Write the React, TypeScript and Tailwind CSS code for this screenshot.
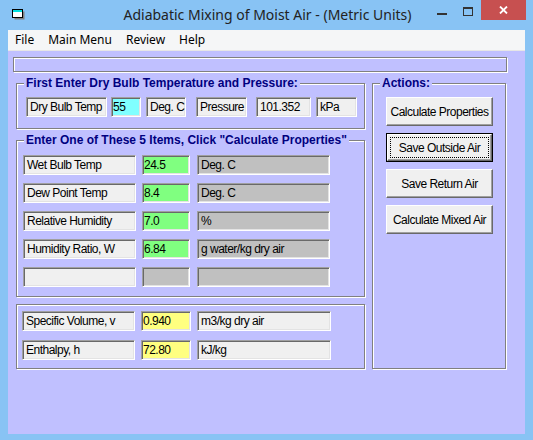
import React from 'react';

const sans = { fontFamily: '"Liberation Sans", Arial, sans-serif' };

const etched = 'border border-[#808080] shadow-[inset_1px_1px_0_#fff,1px_1px_0_#fff]';
const sunken =
  'border border-t-[#a0a0a0] border-l-[#a0a0a0] border-b-white border-r-white shadow-[inset_1px_1px_0_#696969,inset_-1px_-1px_0_#e3e3e3]';

interface FieldProps {
  w: string;
  bg?: string;
  pad?: boolean;
  children?: React.ReactNode;
}

const Field = ({ w, bg = 'bg-[#f0f0f0]', pad = true, children }: FieldProps) => (
  <div
    className={`h-[20px] shrink-0 ${w} ${bg} ${sunken} flex items-center text-[12px] tracking-[-0.5px] text-black whitespace-nowrap overflow-hidden ${pad ? 'pl-[3px]' : 'pl-[1px]'}`}
  >
    {children}
  </div>
);

const Group = ({ title, className, children }: { title?: string; className: string; children: React.ReactNode }) => (
  <div className={`relative ${etched} ${className}`}>
    {title && (
      <span className="absolute top-[-8px] left-[7px] px-[2px] bg-[#c0c0ff] text-[12px] leading-[14px] font-bold text-[#000080] whitespace-nowrap">
        {title}
      </span>
    )}
    {children}
  </div>
);

const Button = ({ children, focused }: { children: React.ReactNode; focused?: boolean }) =>
  focused ? (
    <div className="w-[107px] h-[29px] border border-black">
      <div className="h-full bg-[#f0f0f0] border border-t-white border-l-white border-b-[#696969] border-r-[#696969] shadow-[inset_-1px_-1px_0_#a0a0a0] p-[2px] flex">
        <div className="flex-1 border border-dotted border-black flex items-center justify-center text-[12px] tracking-[-0.5px] text-black">
          {children}
        </div>
      </div>
    </div>
  ) : (
    <div className="w-[107px] h-[29px] bg-[#f0f0f0] border border-t-white border-l-white border-b-[#696969] border-r-[#696969] shadow-[inset_-1px_-1px_0_#a0a0a0] flex items-center justify-center text-[12px] tracking-[-0.5px] text-black">
      {children}
    </div>
  );

const rows = [
  { label: 'Wet Bulb Temp', value: '24.5', unit: 'Deg. C' },
  { label: 'Dew Point Temp', value: '8.4', unit: 'Deg. C' },
  { label: 'Relative Humidity', value: '7.0', unit: '%' },
  { label: 'Humidity Ratio, W', value: '6.84', unit: 'g water/kg dry air' },
  { label: '', value: '', unit: '' },
];

export default function App() {
  return (
    <div className="w-[533px] h-[440px] bg-[#88c3f4] flex flex-col overflow-hidden" style={sans}>
      {/* title bar */}
      <div className="relative h-[30px] shrink-0 flex items-center">
        <svg className="ml-[12px] mb-[2px]" width="14" height="12" viewBox="0 0 14 12">
          <rect x="2.5" y="3.5" width="10" height="8" fill="#808080" />
          <rect x="0.5" y="1.5" width="10" height="8" fill="#fff" stroke="#000" />
          <rect x="1" y="2" width="9" height="2" fill="#00e0e0" />
        </svg>
        <div
          className="absolute left-[2px] right-0 top-[5px] text-center text-[14px] leading-[20px] text-[#222]"
          style={{ fontFamily: '"Noto Sans", "Open Sans", sans-serif' }}
        >
          Adiabatic Mixing of Moist Air - (Metric Units)
        </div>
        <div className="ml-auto flex items-start self-start h-[21px]">
          <div className="w-[10px] h-[2px] bg-[#333] mt-[13px] mr-[16px]" />
          <div className="w-[10px] h-[9px] border border-t-2 border-[#333] mt-[7px] mr-[8px]" />
          <div className="w-[45px] h-[20px] bg-[#c75050] flex items-center justify-center mr-[7px]">
            <svg width="9" height="8" viewBox="0 0 9 8">
              <path d="M1 0.5 L8 7.5 M8 0.5 L1 7.5" stroke="#fff" strokeWidth="1.8" />
            </svg>
          </div>
        </div>
      </div>

      {/* client */}
      <div className="flex-1 mx-[8px] mb-[6px] flex flex-col">
        <div
          className="h-[21px] shrink-0 bg-[#f5f6f7] border-b border-[#e6e6e6] flex items-center text-[12px] text-black"
          style={{ fontFamily: '"Noto Sans", "Open Sans", sans-serif' }}
        >
          <span className="px-[7px]">File</span>
          <span className="px-[7px]">Main Menu</span>
          <span className="px-[7px]">Review</span>
          <span className="px-[7px]">Help</span>
        </div>

        <div className="flex-1 bg-[#c0c0ff] pt-[6px]">
          <div className={`ml-[5px] w-[494px] h-[15px] ${etched}`} />

          <div className="flex gap-[7px] pl-[8px] mt-[11px]">
            <div className="w-[349px] flex flex-col">
              <Group title="First Enter Dry Bulb Temperature and Pressure:" className="h-[46px] pt-[13px] pl-[9px] flex">
                <Field w="w-[81px]">Dry Bulb Temp</Field>
                <div className="ml-[4px]">
                  <Field w="w-[30px]" bg="bg-[#80ffff]" pad={false}>55</Field>
                </div>
                <div className="ml-[5px]">
                  <Field w="w-[40px]">Deg. C</Field>
                </div>
                <div className="ml-[10px]">
                  <Field w="w-[51px]">Pressure</Field>
                </div>
                <div className="ml-[9px]">
                  <Field w="w-[55px]">101.352</Field>
                </div>
                <div className="ml-[5px]">
                  <Field w="w-[41px]">kPa</Field>
                </div>
              </Group>

              <Group
                title={'Enter One of These 5 Items, Click "Calculate Properties"'}
                className="mt-[11px] h-[157px] pt-[14px] pl-[6px] flex flex-col gap-[8px]"
              >
                {rows.map((r, i) => (
                  <div key={i} className="flex gap-[6px]">
                    <Field w="w-[113px]">{r.label}</Field>
                    <Field w="w-[48px]" bg={r.value ? 'bg-[#80ff80]' : 'bg-[#c0c0c0]'} pad={false}>
                      {r.value}
                    </Field>
                    <div className="ml-[1px]">
                      <Field w="w-[133px]" bg="bg-[#c0c0c0]">{r.unit}</Field>
                    </div>
                  </div>
                ))}
              </Group>

              <Group className="mt-[7px] h-[65px] pt-[6px] pl-[5px] flex flex-col gap-[9px]">
                <div className="flex gap-[6px]">
                  <Field w="w-[113px]">Specific Volume, v</Field>
                  <Field w="w-[50px]" bg="bg-[#ffff80]" pad={false}>0.940</Field>
                  <Field w="w-[134px]">m3/kg dry air</Field>
                </div>
                <div className="flex gap-[6px]">
                  <Field w="w-[113px]">Enthalpy, h</Field>
                  <Field w="w-[50px]" bg="bg-[#ffff80]" pad={false}>72.80</Field>
                  <Field w="w-[134px]">kJ/kg</Field>
                </div>
              </Group>
            </div>

            <Group title="Actions:" className="w-[134px] h-[286px] pt-[13px] pl-[13px] flex flex-col gap-[7px]">
              <Button>Calculate Properties</Button>
              <Button focused>Save Outside Air</Button>
              <Button>Save Return Air</Button>
              <Button>Calculate Mixed Air</Button>
            </Group>
          </div>
        </div>
      </div>
    </div>
  );
}
